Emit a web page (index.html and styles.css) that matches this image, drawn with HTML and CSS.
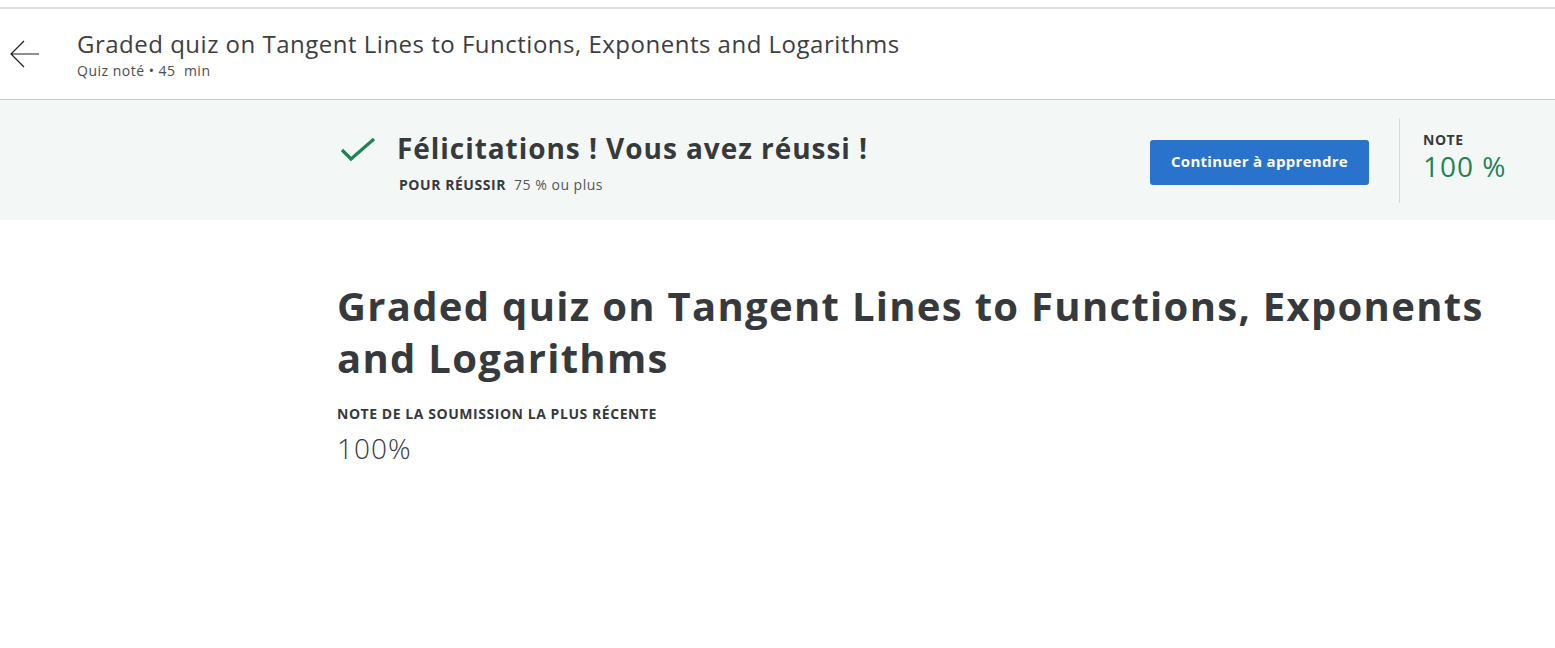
FILE: index.html
```html
<!DOCTYPE html>
<html lang="fr">
<head>
<meta charset="utf-8">
<title>Quiz</title>
<link rel="stylesheet" href="styles.css">
</head>
<body>
<div class="topline"></div>
<header class="header">
  <button class="back" aria-label="Retour">
    <svg width="32" height="32" viewBox="0 0 32 32"><path d="M30 16H2M15 3L2 16l13 13" fill="none" stroke="#1f1f1f" stroke-width="1.2"/></svg>
  </button>
  <div class="header-text">
    <h1 class="header-title">Graded quiz on Tangent Lines to Functions, Exponents and Logarithms</h1>
    <div class="header-sub">Quiz noté • 45&nbsp; min</div>
  </div>
</header>
<section class="banner">
  <div class="banner-main">
    <svg class="check" width="36" height="28" viewBox="0 0 36 28"><path d="M2 14l9 9L34 3" fill="none" stroke="#1f8354" stroke-width="3.2"/></svg>
    <div>
      <h2 class="banner-title">Félicitations ! Vous avez réussi !</h2>
      <div class="banner-pass"><span class="label">POUR RÉUSSIR</span> 75 % ou plus</div>
    </div>
  </div>
  <button class="btn">Continuer à apprendre</button>
  <div class="grade">
    <div class="label">NOTE</div>
    <div class="grade-value">100 %</div>
  </div>
</section>
<main class="content">
  <h2 class="quiz-title">Graded quiz on Tangent Lines to Functions, Exponents and Logarithms</h2>
  <div class="label">NOTE DE LA SOUMISSION LA PLUS RÉCENTE</div>
  <div class="latest">100%</div>
</main>
</body>
</html>
```

FILE: styles.css
```css
* { box-sizing: border-box; }
html, body { margin: 0; padding: 0; background: #fff; }
body { font-family: "Open Sans", "Noto Sans", sans-serif; color: #373a3c; width: 1555px; }

.topline { height: 2px; margin-top: 7px; background: #dcdce1; }

.header {
  display: flex;
  align-items: flex-start;
  height: 91px;
  border-bottom: 1px solid #c6c6c6;
}
.back {
  border: 0; background: none; padding: 0;
  margin: 29px 0 0 9px;
  width: 32px; height: 32px;
  cursor: pointer;
}
.back svg { display: block; }
.header-text { margin-left: 36px; padding-top: 18px; }
.header-title {
  margin: 0;
  font-size: 24px; font-weight: 400; line-height: 34px;
  letter-spacing: 0.5px;
  color: #3c3e41;
}
.header-sub { font-size: 14px; line-height: 20px; color: #4b4d50; letter-spacing: 0.5px; }

.banner {
  display: flex;
  align-items: center;
  height: 120px;
  background: #f3f8f6;
  padding: 2px 36px 0 340px;
}
.banner-main { display: flex; align-items: flex-start; flex: 1; }
.check { margin-top: 8px; margin-right: 21px; display: block; }
.banner-title {
  margin: 0;
  font-size: 28px; font-weight: 700; line-height: 40px;
  letter-spacing: 0.95px;
  color: #373a3c;
}
.banner-pass { font-size: 14px; color: #545659; margin-top: 7px; margin-left: 2px; line-height: 20px; letter-spacing: 0.5px; }
.label { font-size: 14px; font-weight: 700; color: #373a3c; letter-spacing: 0.55px; }
.banner-pass .label { margin-right: 4px; }

.btn {
  width: 219px; height: 45px;
  margin-top: 2px;
  background: #2a73cc;
  color: #fff;
  border: 0; border-radius: 3px;
  font-family: inherit; font-size: 15px; font-weight: 700;
  letter-spacing: 0.3px;
  padding: 0 0 2px 0;
  cursor: pointer;
}
.grade {
  width: 120px;
  margin-left: 30px;
  align-self: stretch;
  margin-top: 16px; margin-bottom: 17px;
  border-left: 1px solid #d9d9d9;
  padding-left: 23px;
  padding-top: 12px;
}
.grade .label { line-height: 20px; }
.grade-value { font-size: 28px; line-height: 34px; color: #1f8354; margin-top: -1px; letter-spacing: 1px; }

.content { padding: 60px 0 0 337px; }
.quiz-title {
  margin: 0;
  font-size: 40px; font-weight: 700; line-height: 52px;
  letter-spacing: 1.3px;
  color: #373a3c;
  max-width: 1190px;
}
.content .label { margin-top: 20px; line-height: 20px; }
.latest { font-size: 28px; font-weight: 300; line-height: 40px; color: #373a3c; margin-top: 4px; letter-spacing: 1px; }
```
